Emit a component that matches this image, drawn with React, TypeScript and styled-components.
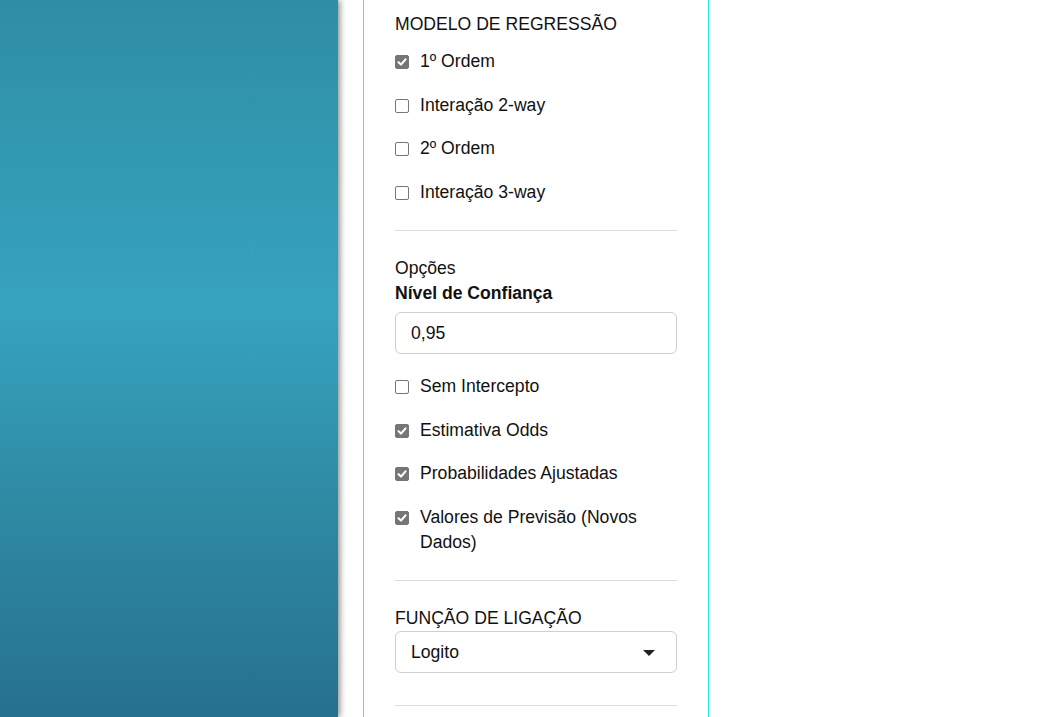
import React, { FC, useState } from 'react';
import styled, { createGlobalStyle } from 'styled-components';

const GlobalStyle = createGlobalStyle`
  html, body {
    margin: 0;
    padding: 0;
    background: #fff;
  }
  body {
    font-family: "Liberation Sans", Arial, sans-serif;
    font-size: 17.6px;
    color: #111;
  }
`;

const Page = styled.div`
  display: flex;
  flex-flow: row nowrap;
  height: 717px;
  overflow: hidden;
`;

const Sidebar = styled.aside`
  flex: 0 0 338px;
  background: linear-gradient(180deg, #2f8ea5 0%, #37a3bf 43%, #2f8aa4 70%, #26708d 100%);
  box-shadow: 2px 0 6px rgba(0, 0, 0, 0.45);
  z-index: 1;
`;

const Main = styled.main`
  flex: 1;
  padding-left: 25px;
`;

const Panel = styled.section`
  width: 282px;
  height: 100%;
  padding: 12px 31px 0;
  border-left: 1px solid #3fe8dc;
  border-right: 1px solid #1ff2e2;
`;

const Section = styled.div<{ first?: boolean }>`
  padding: ${({ first }) => (first ? '0' : '25px')} 0 25px;
  border-bottom: 1px solid #dcdcdc;
`;

const Heading = styled.div<{ tight?: boolean }>`
  line-height: 25px;
  margin-bottom: ${({ tight }) => (tight ? 0 : 12)}px;
`;

const SubTitle = styled.div`
  line-height: 25px;
`;

const FieldLabel = styled.div`
  line-height: 25px;
  font-weight: bold;
  margin-bottom: 6px;
`;

const List = styled.div`
  display: flex;
  flex-flow: column nowrap;
  gap: 18.7px;
`;

const Row = styled.label`
  display: flex;
  align-items: flex-start;
  line-height: 25px;
  cursor: pointer;
`;

const Box = styled.span<{ checked: boolean }>`
  flex: 0 0 auto;
  box-sizing: border-box;
  width: 14px;
  height: 14px;
  margin: 6px 11px 0 0;
  border-radius: 2px;
  border: 1px solid #767676;
  background: ${({ checked }) => (checked ? '#767676' : '#fff')};
  display: flex;
  align-items: center;
  justify-content: center;
`;

const TextInput = styled.input`
  display: block;
  box-sizing: border-box;
  width: 100%;
  height: 42px;
  padding: 0 15px;
  border: 1px solid #cfcfcf;
  border-radius: 6px;
  font-family: inherit;
  font-size: 17.6px;
  color: #111;
  outline: none;
  margin-bottom: 20px;
`;

const Select = styled.div`
  box-sizing: border-box;
  height: 42px;
  padding: 0 21px 0 15px;
  border: 1px solid #cfcfcf;
  border-radius: 6px;
  display: flex;
  align-items: center;
  justify-content: space-between;
`;

const Caret = styled.span`
  width: 0;
  height: 0;
  border-left: 6px solid transparent;
  border-right: 6px solid transparent;
  border-top: 6px solid #222;
  margin-top: 1px;
`;

const Spacer = styled.div`
  height: 7px;
`;

const Check: FC<{ label: string; initial?: boolean }> = ({ label, initial = false }) => {
  const [checked, setChecked] = useState(initial);
  return (
    <Row onClick={() => setChecked(!checked)}>
      <Box checked={checked}>
        {checked ? (
          <svg width="10" height="10" viewBox="0 0 10 10">
            <path d="M1.5 5.2 L4 7.6 L8.5 2.4" fill="none" stroke="#fff" strokeWidth="2.1" strokeLinecap="round" strokeLinejoin="round" />
          </svg>
        ) : undefined}
      </Box>
      <span>{label}</span>
    </Row>
  );
};

const modelo = [
  { label: '1º Ordem', on: true },
  { label: 'Interação 2-way', on: false },
  { label: '2º Ordem', on: false },
  { label: 'Interação 3-way', on: false },
];

const opcoes = [
  { label: 'Sem Intercepto', on: false },
  { label: 'Estimativa Odds', on: true },
  { label: 'Probabilidades Ajustadas', on: true },
  { label: 'Valores de Previsão (Novos Dados)', on: true },
];

export default function App() {
  return (
    <>
      <GlobalStyle />
      <Page>
        <Sidebar />
        <Main>
          <Panel>
            <Section first>
              <Heading>MODELO DE REGRESSÃO</Heading>
              <List>
                {modelo.map((m) => <Check key={m.label} label={m.label} initial={m.on} />)}
              </List>
            </Section>
            <Section>
              <SubTitle>Opções</SubTitle>
              <FieldLabel>Nível de Confiança</FieldLabel>
              <TextInput defaultValue="0,95" />
              <List>
                {opcoes.map((o) => <Check key={o.label} label={o.label} initial={o.on} />)}
              </List>
            </Section>
            <Section>
              <Heading tight>FUNÇÃO DE LIGAÇÃO</Heading>
              <Select>
                <span>Logito</span>
                <Caret />
              </Select>
              <Spacer />
            </Section>
          </Panel>
        </Main>
      </Page>
    </>
  );
}
